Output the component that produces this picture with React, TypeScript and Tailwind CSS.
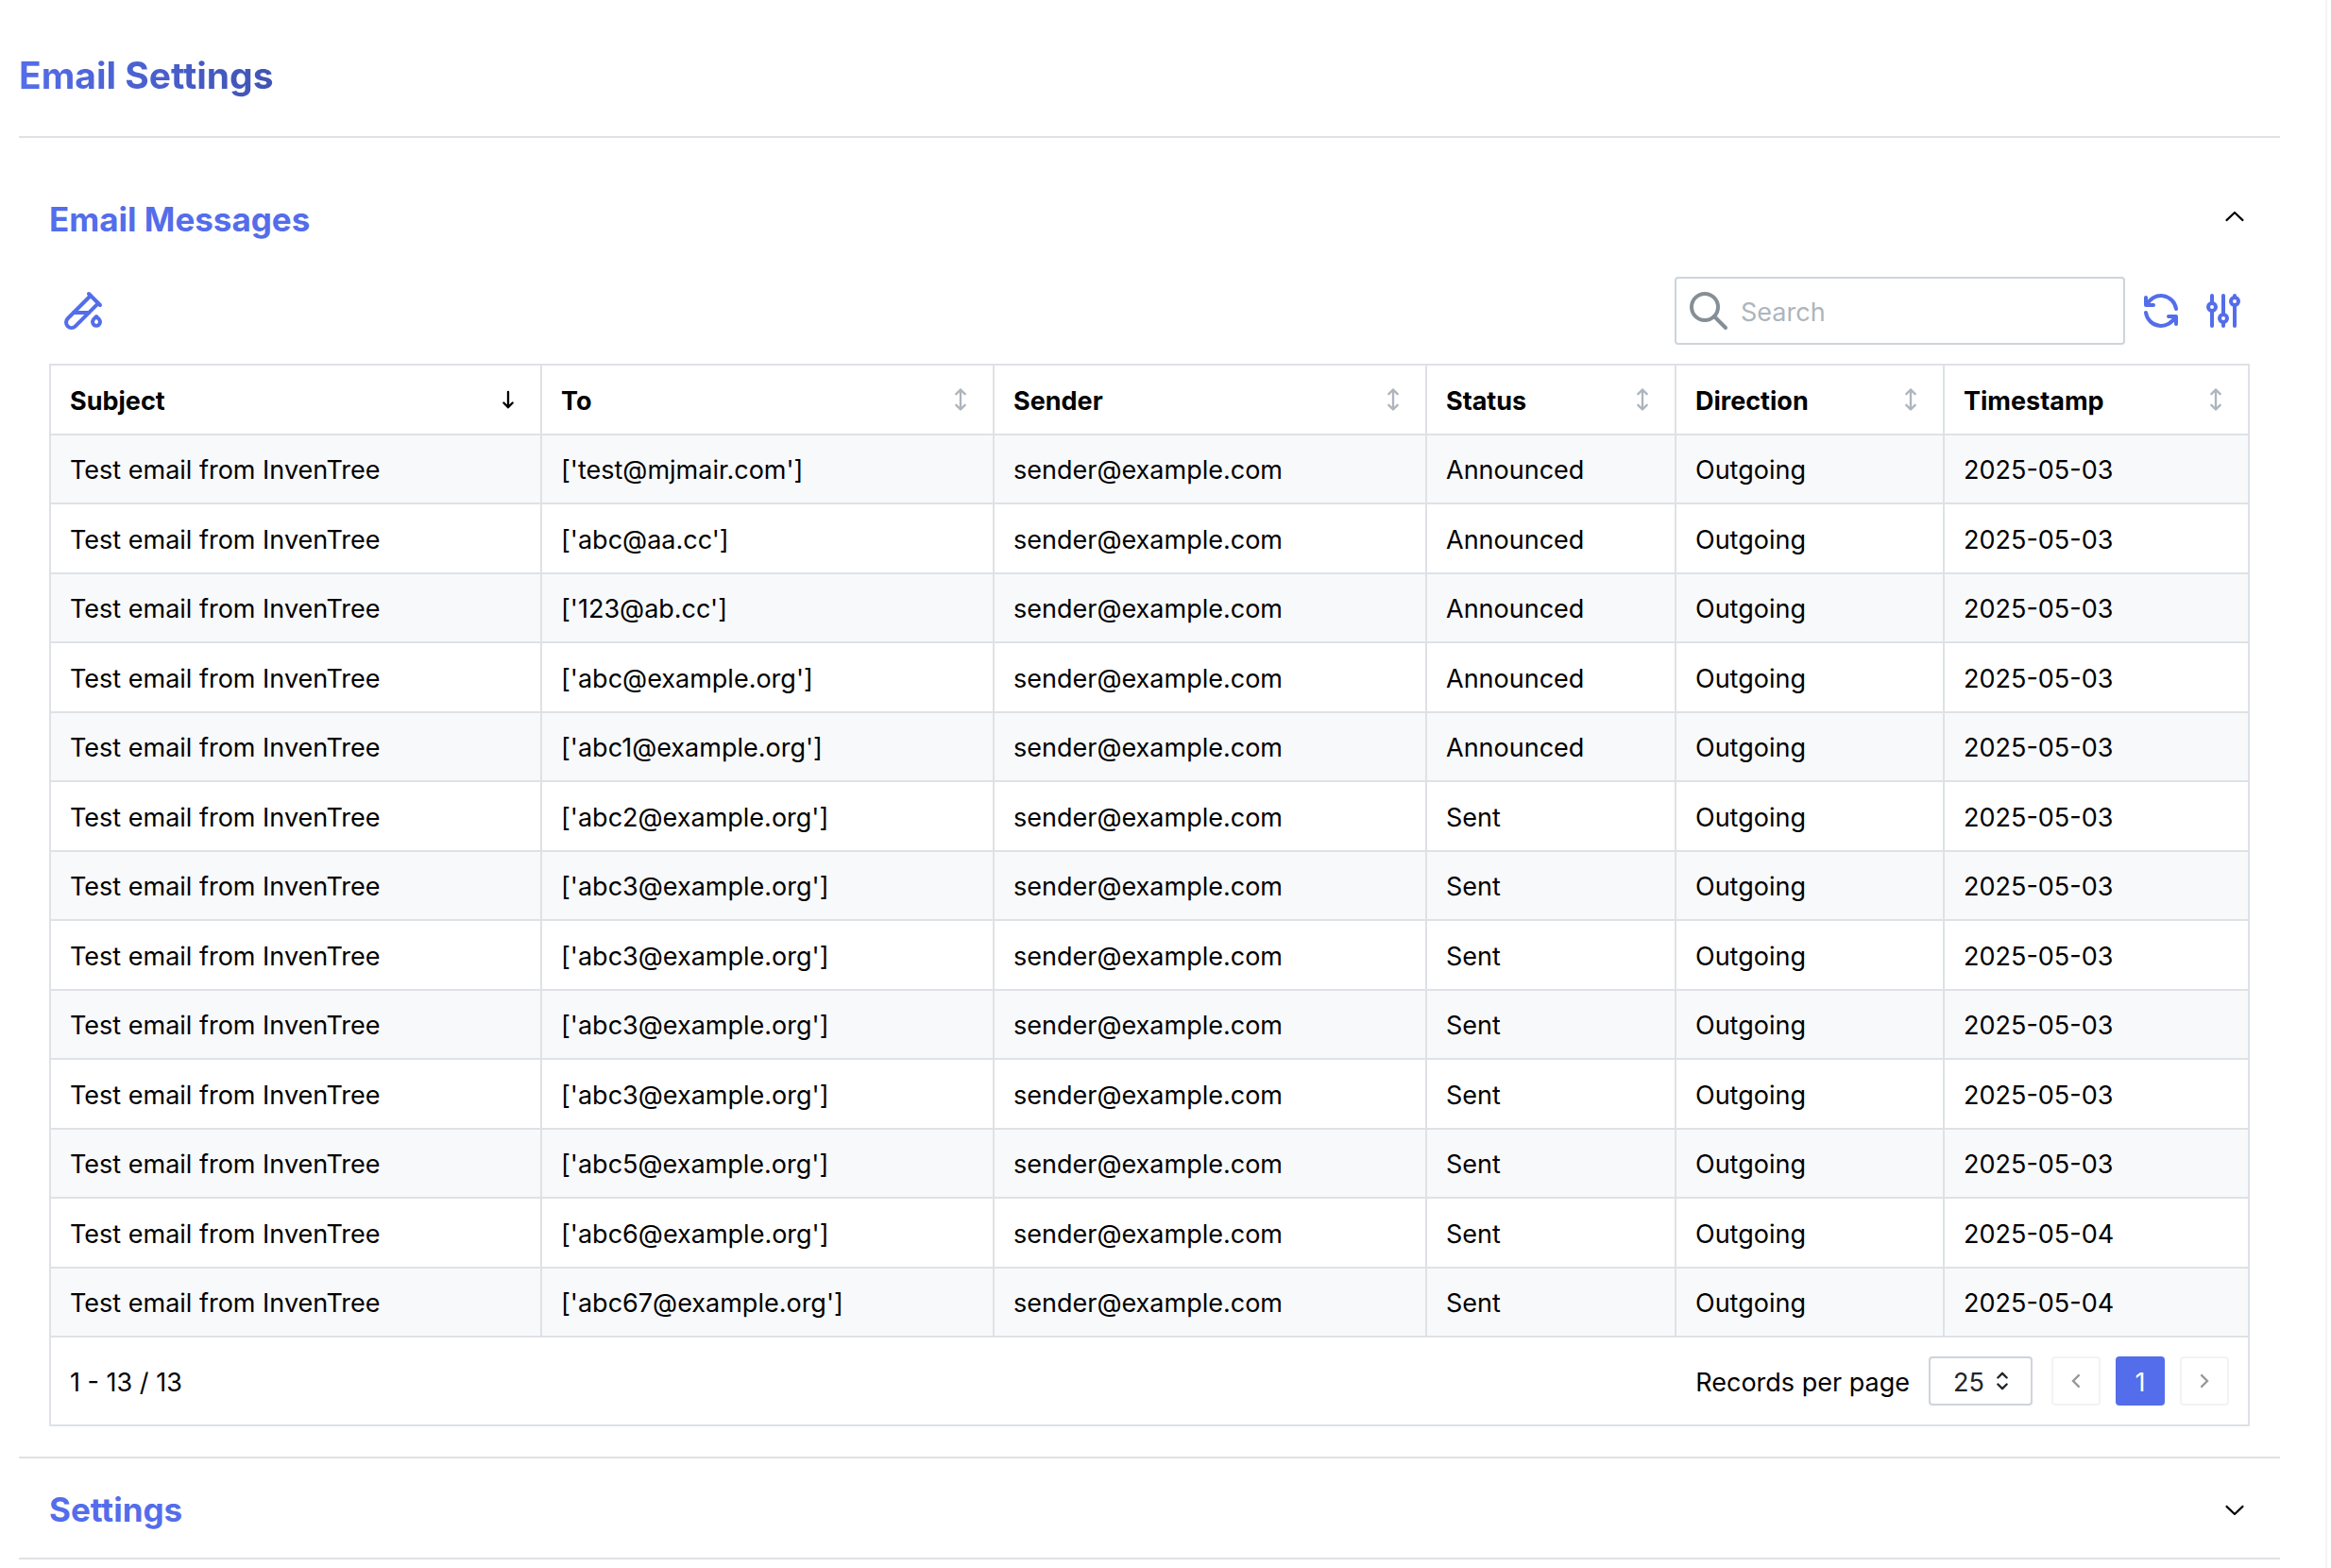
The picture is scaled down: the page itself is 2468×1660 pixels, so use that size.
import { useState } from 'react'
import type { ReactNode } from 'react'
import { TbAdjustments, TbRefresh, TbSearch, TbSelector, TbTestPipe } from 'react-icons/tb'

interface EmailMessage {
  id: number
  subject: string
  to: string
  sender: string
  status: 'Announced' | 'Sent'
  direction: string
  timestamp: string
}

type Column = { key: keyof EmailMessage; title: string; width: string }

const columns: Column[] = [
  { key: 'subject', title: 'Subject', width: '' },
  { key: 'to', title: 'To', width: 'w-[479px]' },
  { key: 'sender', title: 'Sender', width: 'w-[458px]' },
  { key: 'status', title: 'Status', width: 'w-[264px]' },
  { key: 'direction', title: 'Direction', width: 'w-[284px]' },
  { key: 'timestamp', title: 'Timestamp', width: 'w-[321px]' },
]

const recipients = [
  'test@mjmair.com',
  'abc@aa.cc',
  '123@ab.cc',
  'abc@example.org',
  'abc1@example.org',
  'abc2@example.org',
  'abc3@example.org',
  'abc3@example.org',
  'abc3@example.org',
  'abc3@example.org',
  'abc5@example.org',
  'abc6@example.org',
  'abc67@example.org',
]

const messages: EmailMessage[] = recipients.map((to, i) => ({
  id: i,
  subject: 'Test email from InvenTree',
  to: `['${to}']`,
  sender: 'sender@example.com',
  status: i < 5 ? 'Announced' : 'Sent',
  direction: 'Outgoing',
  timestamp: i < 11 ? '2025-05-03' : '2025-05-04',
}))

function Chevron({ open }: { open: boolean }) {
  return (
    <svg viewBox="0 0 15 15" fill="currentColor" className={`size-8 ${open ? 'rotate-180' : ''}`}>
      <path
        fillRule="evenodd"
        clipRule="evenodd"
        d="M3.13523 6.15803C3.3241 5.95657 3.64052 5.94637 3.84197 6.13523L7.5 9.56464L11.158 6.13523C11.3595 5.94637 11.6759 5.95657 11.8648 6.15803C12.0536 6.35949 12.0434 6.67591 11.842 6.86477L7.84197 10.6148C7.64964 10.7951 7.35036 10.7951 7.15803 10.6148L3.15803 6.86477C2.95657 6.67591 2.94637 6.35949 3.13523 6.15803Z"
      />
    </svg>
  )
}

function SortIcon({ active }: { active: boolean }) {
  return (
    <svg
      viewBox="0 0 24 24"
      fill="none"
      stroke="currentColor"
      strokeWidth={2}
      strokeLinecap="round"
      strokeLinejoin="round"
      className={`size-7 ${active ? 'text-black' : 'text-[#adb5bd]'}`}
    >
      {active ? <path d="M12 5v14M16 15l-4 4M8 15l4 4" /> : <path d="M8 7l4-4l4 4M8 17l4 4l4-4M12 3v18" />}
    </svg>
  )
}

function Section({ title, open, onToggle, children }: { title: string; open: boolean; onToggle: () => void; children?: ReactNode }) {
  return (
    <section className="border-b-2 border-[#dee2e6]">
      <h2>
        <button
          onClick={onToggle}
          aria-expanded={open}
          className="flex h-[105px] w-full items-center justify-between px-8 text-[35px] font-bold text-[#546dea]"
        >
          <span className="pt-1">{title}</span>
          <span className="text-black">
            <Chevron open={open} />
          </span>
        </button>
      </h2>
      {open && children && <div className="px-8 pt-[10px] pb-8">{children}</div>}
    </section>
  )
}

export default function App() {
  const [openSections, setOpenSections] = useState<string[]>(['messages'])
  const [search, setSearch] = useState('')
  const [sortBy, setSortBy] = useState<keyof EmailMessage>('subject')

  const toggle = (id: string) =>
    setOpenSections(prev => (prev.includes(id) ? prev.filter(s => s !== id) : [...prev, id]))

  const rows = messages
    .filter(m => m.to.includes(search) || m.subject.includes(search))
    .sort((a, b) => String(a[sortBy]).localeCompare(String(b[sortBy])) || a.id - b.id)

  return (
    <div className="mr-1 min-h-screen border-r-2 border-[#f1f3f5] bg-white pr-12 pl-5 font-['Inter',sans-serif] text-[27px] text-black">
      <header className="flex h-[146px] items-center border-b-2 border-[#dee2e6] pt-4">
        <h1 className="bg-gradient-to-r from-[#546dea] to-[#4054b2] bg-clip-text text-[39px] font-bold text-transparent">
          Email Settings
        </h1>
      </header>

      <main className="pt-8">
        <Section title="Email Messages" open={openSections.includes('messages')} onToggle={() => toggle('messages')}>
          {/* toolbar */}
          <div className="mb-5 flex items-center justify-between">
            <div className="pl-2">
              <button aria-label="Send test email" className="flex size-14 items-center justify-center text-[#546dea]">
                <TbTestPipe className="size-12" />
              </button>
            </div>
            <div className="flex items-center gap-[10px]">
              <label className="flex h-[72px] w-[477px] items-center gap-[10px] rounded-sm border-2 border-[#ced4da] px-[10px]">
                <TbSearch className="size-12 shrink-0 text-[#868e96]" />
                <input
                  type="text"
                  aria-label="Search"
                  placeholder="Search"
                  value={search}
                  onChange={e => setSearch(e.target.value)}
                  className="min-w-0 flex-1 pt-1 outline-none placeholder:text-[#adb5bd]"
                />
              </label>
              <button aria-label="Refresh data" className="flex size-14 items-center justify-center text-[#546dea]">
                <TbRefresh className="size-12" />
              </button>
              <button aria-label="Select columns" className="flex size-14 items-center justify-center text-[#546dea]">
                <TbAdjustments className="size-12" />
              </button>
            </div>
          </div>

          <div className="border-2 border-[#dee2e6]">
            <table className="w-full table-fixed border-separate border-spacing-0 text-left">
              <thead>
                <tr className="h-[74px]">
                  {columns.map(col => (
                    <th key={col.key} className={`border-r-2 border-b-2 border-[#dee2e6] px-5 font-bold last:border-r-0 ${col.width}`}>
                      <button onClick={() => setSortBy(col.key)} className="flex w-full items-center justify-between">
                        <span className="pt-1">{col.title}</span>
                        <SortIcon active={sortBy === col.key} />
                      </button>
                    </th>
                  ))}
                </tr>
              </thead>
              <tbody>
                {rows.map(row => (
                  <tr key={row.id} className="odd:h-[73px] odd:bg-[#f8f9fb] even:h-[74px]">
                    {columns.map(col => (
                      <td key={col.key} className="border-r-2 border-b-2 border-[#dee2e6] px-5 pt-1 last:border-r-0">
                        {row[col.key]}
                      </td>
                    ))}
                  </tr>
                ))}
              </tbody>
            </table>

            {/* pagination */}
            <div className="flex items-center justify-between p-5">
              <span className="pt-1">1 - 13 / 13</span>
              <div className="flex items-center gap-5">
                <label htmlFor="page-size" className="pt-1">Records per page</label>
                <div className="relative">
                  <select
                    id="page-size"
                    defaultValue="25"
                    className="h-[52px] w-[110px] appearance-none rounded-sm border-2 border-[#ced4da] bg-white pt-1 pl-6 text-[#212529]"
                  >
                    <option>10</option>
                    <option>25</option>
                    <option>50</option>
                  </select>
                  <TbSelector className="pointer-events-none absolute top-3 right-[18px] size-7 text-[#212529]" />
                </div>
                <nav className="flex gap-4">
                  <button disabled aria-label="Previous page" className="flex size-[52px] items-center justify-center rounded-sm border-2 border-[#dee2e6] opacity-40">
                    <svg viewBox="-1 0 16 16" fill="currentColor" className="size-7">
                      <path d="M6.219 8l3.3 3.3-.943.943L4.333 8l4.243-4.243.943.943L6.219 8z" />
                    </svg>
                  </button>
                  <button className="flex size-[52px] items-center justify-center rounded-sm bg-[#546dea] pt-1 text-white">1</button>
                  <button disabled aria-label="Next page" className="flex size-[52px] items-center justify-center rounded-sm border-2 border-[#dee2e6] opacity-40">
                    <svg viewBox="1 0 16 16" fill="currentColor" className="size-7">
                      <path d="M9.781 8l-3.3-3.3.943-.943L11.667 8l-4.243 4.243-.943-.943L9.781 8z" />
                    </svg>
                  </button>
                </nav>
              </div>
            </div>
          </div>
        </Section>

        <Section title="Settings" open={openSections.includes('settings')} onToggle={() => toggle('settings')} />
      </main>
    </div>
  )
}
